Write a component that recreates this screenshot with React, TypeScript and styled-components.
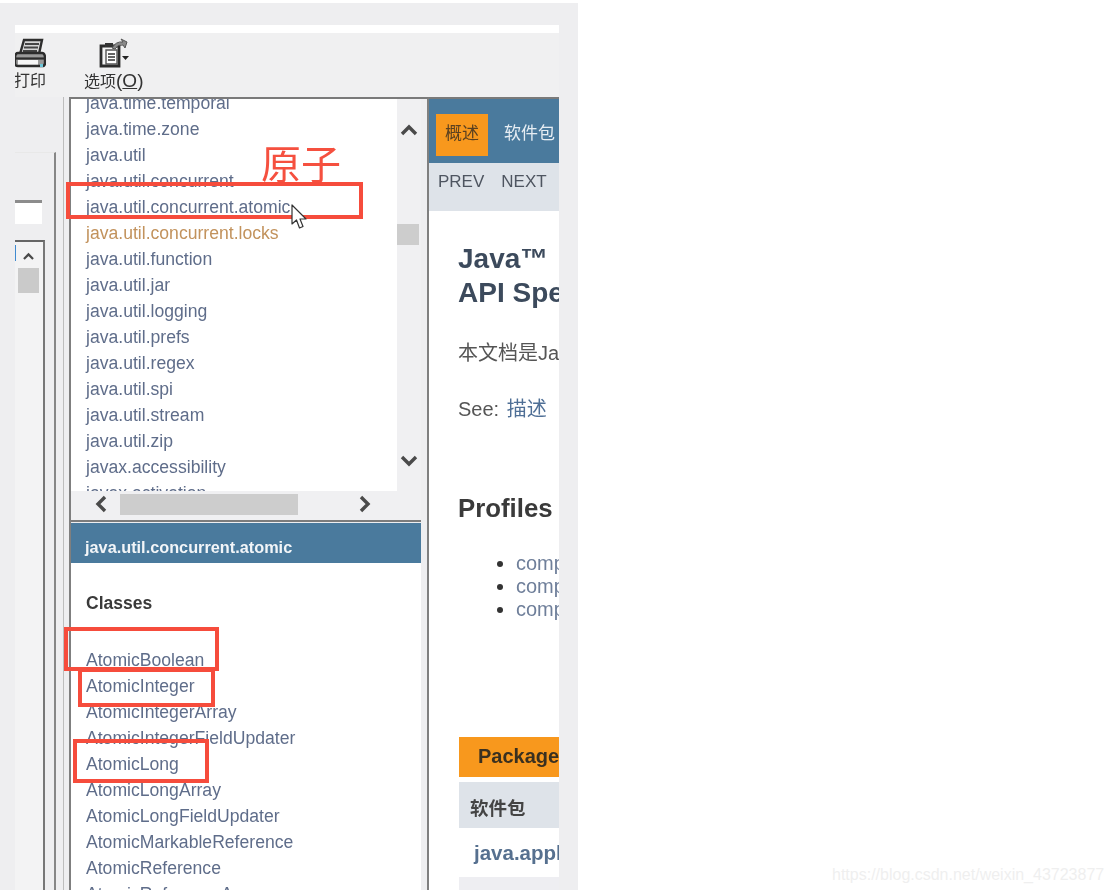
import React from "react";
import styled, { createGlobalStyle } from "styled-components";

const LATIN = `"Liberation Sans", "Noto Sans CJK SC", sans-serif`;

const Global = createGlobalStyle`
  html, body { margin: 0; padding: 0; background: #fff; }
  body { font-family: ${LATIN}; }
`;

const Page = styled.div`
  position: relative;
  width: 1112px;
  height: 892px;
  overflow: hidden;
  background: #fff;
`;

const Shell = styled.div`
  width: 544px;
  height: 865px;
  margin-top: 3px;
  padding: 22px 19px 0 15px;
  background: #eeeef0;
  overflow: hidden;
  filter: blur(0.6px);
`;

const WhiteBar = styled.div`
  height: 8px;
  background: #fff;
`;

const Toolbar = styled.div`
  display: flex;
  gap: 38px;
  height: 64px;
  background: #f0f0f1;
  overflow: hidden;
`;

const ToolButton = styled.div<{ $shift?: number }>`
  display: flex;
  flex-direction: column;
  align-items: center;
  flex: none;
  margin-left: ${(p) => p.$shift ?? 0}px;
  color: #333;
  font-size: 16px;
  line-height: 20px;
  white-space: nowrap;
`;

const ToolIcon = styled.svg`
  display: block;
  width: 32px;
  height: 30px;
  margin-top: 5px;
  margin-bottom: 3px;
`;

const AccessKey = styled.span`
  font-size: 19px;
  line-height: 20px;
`;

const Under = styled.span`
  text-decoration: underline;
`;

const Body = styled.div`
  display: flex;
  height: 793px;
`;

const LeftPane = styled.div`
  width: 48px;
  flex: none;
  border-right: 1px solid #bdbdbd;
  padding-top: 55px;
`;

const NavBox = styled.div`
  width: 41px;
  height: 100%;
  border-right: 2px solid #868686;
  border-top: 1px solid #e8e8e8;
  padding-top: 47px;
  box-sizing: border-box;
`;

const InputBox = styled.div`
  width: 27px;
  height: 24px;
  box-sizing: border-box;
  background: #fff;
  border-top: 3px solid #8c8c8c;
`;

const ListBox = styled.div`
  width: 30px;
  height: 700px;
  margin-top: 16px;
  box-sizing: border-box;
  border-top: 2px solid #666;
  border-right: 2px solid #777;
  background: #f3f3f4;
  display: flex;
`;

const BlueEdge = styled.div`
  width: 1px;
  height: 16px;
  margin-top: 3px;
  background: #3f8ad0;
  flex: none;
`;

const MiniScroll = styled.div`
  display: flex;
  flex-direction: column;
  align-items: center;
  width: 21px;
  margin-left: 2px;
  padding-top: 8px;
`;

const MiniThumb = styled.div`
  width: 21px;
  height: 25px;
  margin-top: 4px;
  background: #cacaca;
`;

const Frames = styled.div`
  width: 350px;
  flex: none;
  margin-left: 5px;
  padding-right: 6px;
  border-left: 2px solid #7f7f7f;
  border-right: 2px solid #7f7f7f;
  border-top: 2px solid #7a7a7a;
  display: flex;
  flex-direction: column;
  overflow: hidden;
`;

const TopFrame = styled.div`
  display: flex;
  height: 392px;
  flex: none;
`;

const ListView = styled.div`
  flex: 1;
  min-width: 0;
  overflow: hidden;
  background: #fff;
  padding-left: 15px;
`;

const PackageList = styled.div`
  margin-top: -9px;
`;

const Row = styled.div<{ $visited?: boolean }>`
  height: 26px;
  line-height: 26px;
  font-size: 17.6px;
  white-space: nowrap;
  color: ${(p) => (p.$visited ? "#c2925c" : "#5f6d8a")};
`;

const VScroll = styled.div`
  width: 24px;
  flex: none;
  display: flex;
  flex-direction: column;
  align-items: center;
  padding-top: 25px;
  background: #f0f0f2;
`;

const VThumb = styled.div`
  width: 22px;
  height: 21px;
  margin: 86px 2px 209px 0;
  background: #cdcdcd;
`;

const HScroll = styled.div`
  height: 29px;
  flex: none;
  display: flex;
  align-items: center;
  padding: 0 0 3px 22px;
  box-sizing: border-box;
  background: #f0f0f2;
`;

const HThumb = styled.div`
  width: 178px;
  height: 21px;
  margin: 0 56px 0 7px;
  background: #cdcdcd;
`;

const Divider = styled.div`
  height: 2px;
  flex: none;
  background: #7c7c7c;
`;

const PackageTitle = styled.div`
  height: 40px;
  margin-top: 1px;
  flex: none;
  box-sizing: border-box;
  padding-left: 14px;
  line-height: 49px;
  background: #4a7a9d;
  color: #f2f5f8;
  font-size: 16.3px;
  font-weight: bold;
  white-space: nowrap;
`;

const ClassPane = styled.div`
  flex: 1;
  min-height: 0;
  background: #fff;
  padding-left: 15px;
  overflow: hidden;
`;

const ClassHeading = styled.div`
  margin-top: 28px;
  height: 24px;
  line-height: 24px;
  font-size: 17.5px;
  font-weight: bold;
  color: #3a3a3a;
`;

const ClassList = styled.div`
  margin-top: 32px;
`;

const Content = styled.div`
  width: 130px;
  flex: none;
  border-top: 2px solid #7a7a7a;
  background: #fff;
  overflow: hidden;
  white-space: nowrap;
`;

const TopNav = styled.div`
  height: 64px;
  display: flex;
  align-items: flex-start;
  gap: 16px;
  box-sizing: border-box;
  padding: 15px 0 0 7px;
  background: #4a7a9d;
  font-size: 17px;
`;

const ActiveTab = styled.div`
  width: 52px;
  height: 42px;
  flex: none;
  line-height: 40px;
  text-align: center;
  background: #f8981d;
  color: #5a4020;
`;

const NavTab = styled.div`
  line-height: 40px;
  color: #e6edf3;
  flex: none;
`;

const SubNav = styled.div`
  height: 48px;
  display: flex;
  gap: 17px;
  padding: 7px 0 0 9px;
  box-sizing: border-box;
  background: #dee3e9;
  color: #4e5560;
  font-size: 17px;
  line-height: 24px;
`;

const Title = styled.div`
  margin: 31px 0 0 29px;
  font-size: 28px;
  line-height: 34px;
  font-weight: bold;
  color: #3c4a5c;
`;

const Para = styled.div<{ $top: number }>`
  margin: ${(p) => p.$top}px 0 0 29px;
  height: 24px;
  line-height: 24px;
  font-size: 20px;
  color: #555;
`;

const InlineLink = styled.span`
  color: #4f6f96;
  margin-left: 2px;
`;

const SectionHeading = styled.div`
  margin: 72px 0 0 29px;
  font-size: 25.8px;
  line-height: 30px;
  font-weight: bold;
  color: #3a3a3a;
`;

const Bullets = styled.ul`
  margin: 29px 0 0;
  padding: 0 0 0 87px;
  list-style: disc;
  color: #333;
`;

const Bullet = styled.li`
  height: 23px;
  line-height: 23px;
  font-size: 20px;
  & > span {
    color: #6f7f9a;
  }
`;

const TableWrap = styled.div`
  margin: 116px 0 0 30px;
  background: #eeeef2;
  height: 200px;
`;

const Caption = styled.div`
  height: 40px;
  box-sizing: border-box;
  padding-left: 19px;
  line-height: 38px;
  background: #f8981d;
  color: #3a3020;
  font-size: 20px;
  font-weight: bold;
`;

const CaptionGap = styled.div`
  height: 5px;
  background: #fff;
`;

const HeadCell = styled.div`
  height: 46px;
  padding-left: 11px;
  line-height: 54px;
  background: #dee3e9;
  color: #444;
  font-size: 18.5px;
  font-weight: bold;
`;

const BodyCell = styled.div`
  height: 49px;
  padding-left: 15px;
  line-height: 50px;
  background: #fff;
  color: #56708f;
  font-size: 20.5px;
  font-weight: bold;
`;

const RedBox = styled.div<{ $x: number; $y: number; $w: number; $h: number }>`
  position: absolute;
  left: ${(p) => p.$x}px;
  top: ${(p) => p.$y}px;
  width: ${(p) => p.$w}px;
  height: ${(p) => p.$h}px;
  box-sizing: border-box;
  border: 4px solid #f64c3c;
`;

const RedNote = styled.div`
  position: absolute;
  left: 261px;
  top: 134px;
  font-family: "Noto Sans CJK SC", sans-serif;
  font-size: 40px;
  line-height: 56px;
  font-weight: 400;
  color: #f5503f;
  filter: blur(0.4px);
`;

const Pointer = styled.svg`
  position: absolute;
  left: 291px;
  top: 204px;
  width: 16px;
  height: 26px;
`;

const Watermark = styled.div`
  position: absolute;
  left: 832px;
  top: 865px;
  font-size: 16px;
  line-height: 20px;
  color: #efefef;
  white-space: nowrap;
`;

const Arrow = ({ dir, size = 20 }: { dir: "up" | "down" | "left" | "right"; size?: number }) => {
  const vertical = dir === "up" || dir === "down";
  const pts = {
    up: "3,12 10,5 17,12",
    down: "3,5 10,12 17,5",
    left: "12,3 5,10 12,17",
    right: "7,3 14,10 7,17",
  }[dir];
  return (
    <svg width={size} height={vertical ? 14 : size} viewBox={vertical ? "0 2 20 14" : "0 0 20 20"} style={{ flex: "none" }}>
      <polyline points={pts} fill="none" stroke="#4a4a4a" strokeWidth="3.4" />
    </svg>
  );
};

const packages = [
  "java.time.temporal",
  "java.time.zone",
  "java.util",
  "java.util.concurrent",
  "java.util.concurrent.atomic",
  "java.util.concurrent.locks",
  "java.util.function",
  "java.util.jar",
  "java.util.logging",
  "java.util.prefs",
  "java.util.regex",
  "java.util.spi",
  "java.util.stream",
  "java.util.zip",
  "javax.accessibility",
  "javax.activation",
];

const classes = [
  "AtomicBoolean",
  "AtomicInteger",
  "AtomicIntegerArray",
  "AtomicIntegerFieldUpdater",
  "AtomicLong",
  "AtomicLongArray",
  "AtomicLongFieldUpdater",
  "AtomicMarkableReference",
  "AtomicReference",
  "AtomicReferenceArray",
];

export default function App() {
  return (
    <Page>
      <Global />
      <Shell>
        <WhiteBar />
        <Toolbar>
          <ToolButton $shift={-1}>
            <ToolIcon viewBox="0 0 32 30">
              <path d="M10 2 L28 2 L25 16 L6 16 Z" fill="#d6d6d6" stroke="#2e2e2e" strokeWidth="2.4" />
              <path d="M11 6 H25 M10 9.5 H24 M9 13 H23" stroke="#444" strokeWidth="1.8" />
              <path d="M4 15 H28 Q31 15 31 20 V25 Q31 28 28 28 H4 Q1 28 1 25 V20 Q1 15 4 15 Z" fill="#9a9a9a" stroke="#2c2c2c" strokeWidth="2.4" />
              <path d="M2 20.5 H30" stroke="#2c2c2c" strokeWidth="2.2" />
              <rect x="4" y="22" width="20" height="4.5" fill="#f6f6f6" />
              <rect x="26" y="26" width="3" height="3" fill="#6cc6d8" />
            </ToolIcon>
            打印
          </ToolButton>
          <ToolButton>
            <ToolIcon viewBox="0 0 32 30">
              <path d="M3 8 H21 V28 H3 Z" fill="#f4f4f4" stroke="#2c2c2c" strokeWidth="2.8" />
              <path d="M8 12 H19 V26 H8 Z" fill="#fff" stroke="#555" strokeWidth="1.4" />
              <path d="M10 16 H17 M10 19 H17 M10 22 H17" stroke="#333" strokeWidth="1.5" />
              <rect x="7" y="5" width="8" height="4" fill="#333" />
              <path d="M14 10 Q18 3 25 4 L23 1 L29 4 L27 10 L25 7 Q20 6 17 11 Z" fill="#8a8a8a" stroke="#555" strokeWidth="1" />
              <path d="M24 18 H31 L27.5 22 Z" fill="#222" />
            </ToolIcon>
            <span>
              选项
              <AccessKey>
                (<Under>O</Under>)
              </AccessKey>
            </span>
          </ToolButton>
        </Toolbar>
        <Body>
          <LeftPane>
            <NavBox>
              <InputBox />
              <ListBox>
                <BlueEdge />
                <MiniScroll>
                  <Arrow dir="up" size={13} />
                  <MiniThumb />
                </MiniScroll>
              </ListBox>
            </NavBox>
          </LeftPane>
          <Frames>
            <TopFrame>
              <ListView>
                <PackageList>
                  {packages.map((name) => (
                    <Row key={name} $visited={name === "java.util.concurrent.locks"}>
                      {name}
                    </Row>
                  ))}
                </PackageList>
              </ListView>
              <VScroll>
                <Arrow dir="up" />
                <VThumb />
                <Arrow dir="down" />
              </VScroll>
            </TopFrame>
            <HScroll>
              <Arrow dir="left" />
              <HThumb />
              <Arrow dir="right" />
            </HScroll>
            <Divider />
            <PackageTitle>java.util.concurrent.atomic</PackageTitle>
            <ClassPane>
              <ClassHeading>Classes</ClassHeading>
              <ClassList>
                {classes.map((name) => (
                  <Row key={name}>{name}</Row>
                ))}
              </ClassList>
            </ClassPane>
          </Frames>
          <Content>
            <TopNav>
              <ActiveTab>概述</ActiveTab>
              <NavTab>软件包</NavTab>
            </TopNav>
            <SubNav>
              <span>PREV</span>
              <span>NEXT</span>
            </SubNav>
            <Title>
              Java™
              <br />
              API Specification
            </Title>
            <Para $top={31}>本文档是Java</Para>
            <Para $top={32}>
              See:<InlineLink> 描述</InlineLink>
            </Para>
            <SectionHeading>Profiles</SectionHeading>
            <Bullets>
              <Bullet><span>compact1</span></Bullet>
              <Bullet><span>compact2</span></Bullet>
              <Bullet><span>compact3</span></Bullet>
            </Bullets>
            <TableWrap>
              <Caption>Packages</Caption>
              <CaptionGap />
              <HeadCell>软件包</HeadCell>
              <BodyCell>java.applet</BodyCell>
            </TableWrap>
          </Content>
        </Body>
      </Shell>
      <RedNote>原子</RedNote>
      <RedBox $x={66} $y={182} $w={297} $h={37} />
      <RedBox $x={64} $y={627} $w={155} $h={44} />
      <RedBox $x={78} $y={668} $w={137} $h={39} />
      <RedBox $x={73} $y={739} $w={136} $h={44} />
      <Pointer viewBox="0 0 16 26">
        <path d="M1 1 L1 20 L5.5 16 L8.5 24 L12 22.5 L9 15 L15 15 Z" fill="#fff" stroke="#333" strokeWidth="1.2" strokeLinejoin="round" />
      </Pointer>
      <Watermark>https://blog.csdn.net/weixin_43723877</Watermark>
    </Page>
  );
}
